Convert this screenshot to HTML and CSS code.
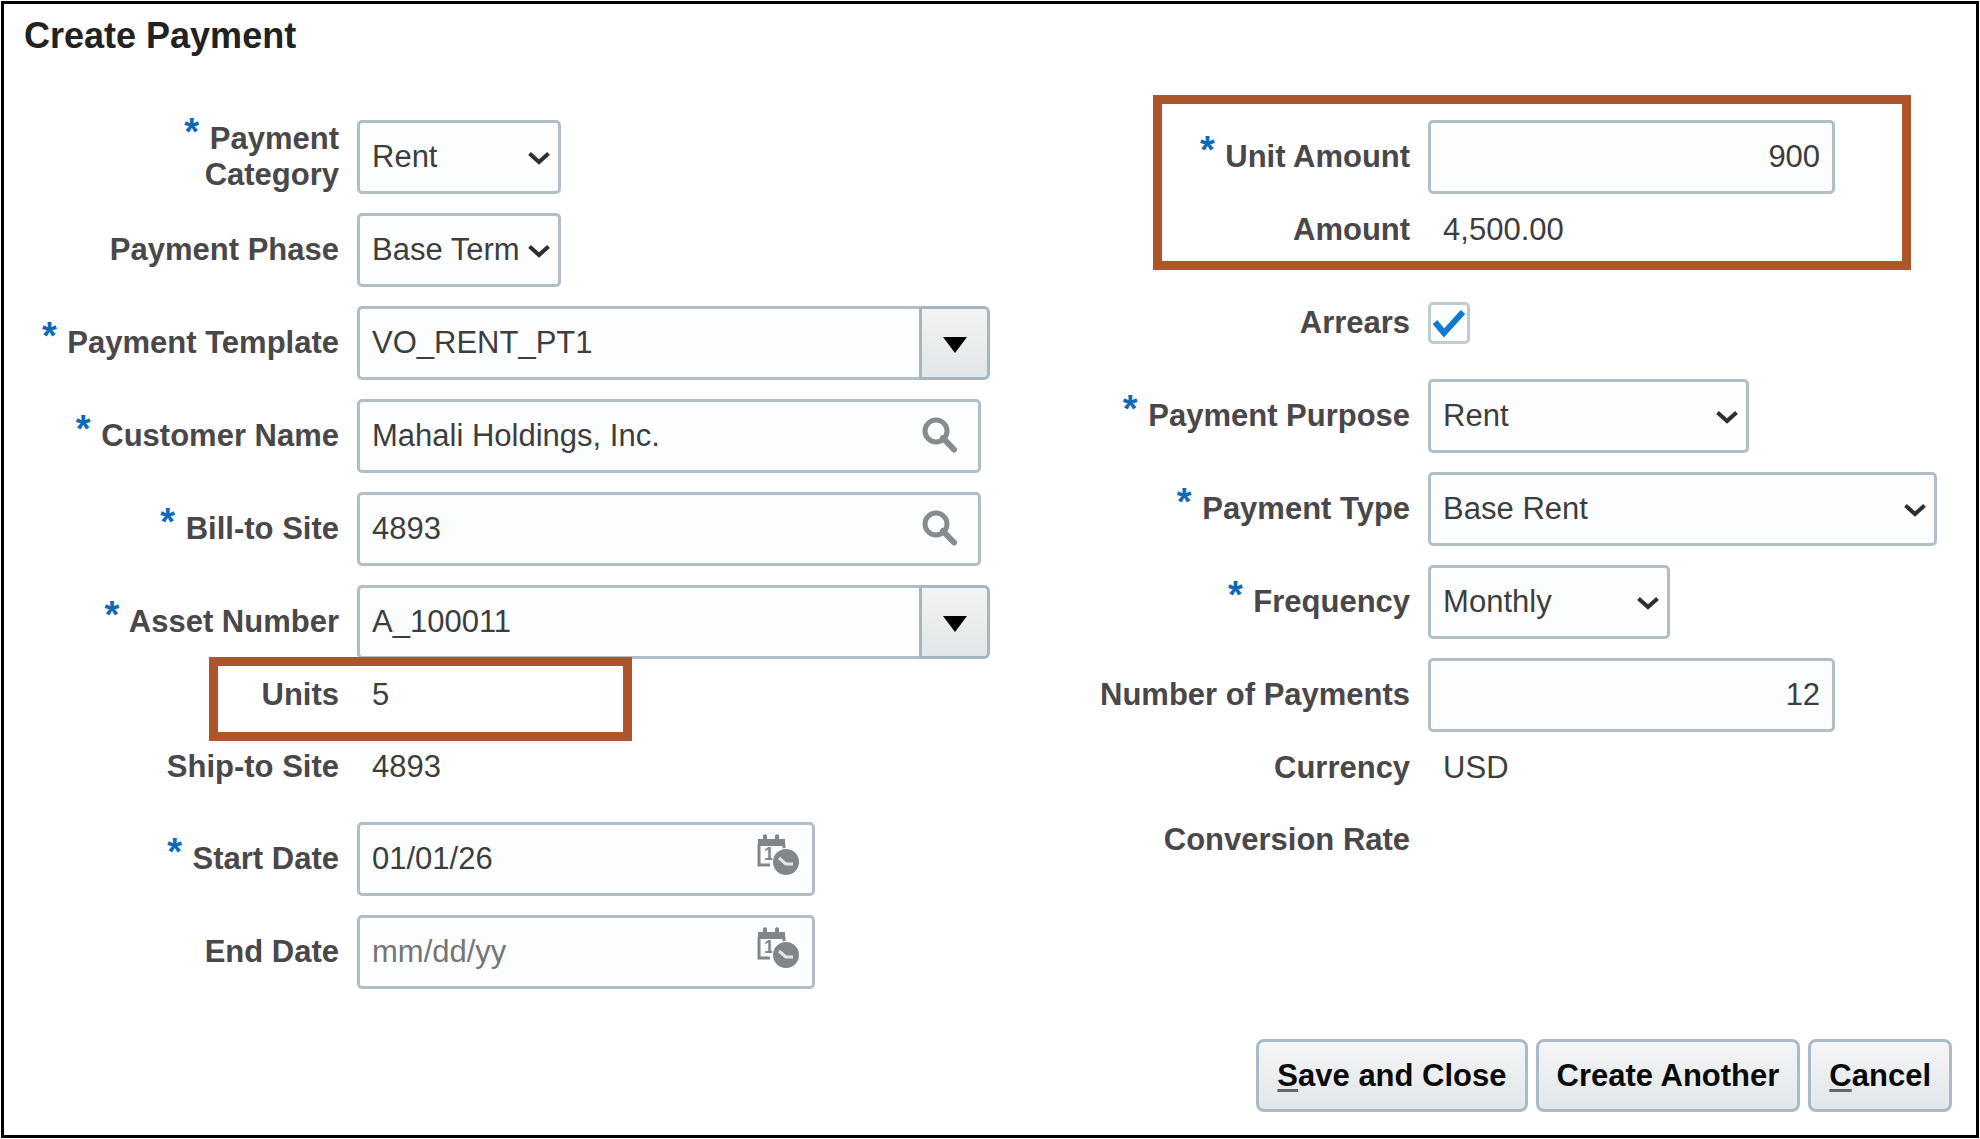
FILE: index.html
```html
<!DOCTYPE html>
<html lang="en">
<head>
    <meta charset="UTF-8">
    <meta name="viewport" content="width=device-width, initial-scale=1.0">
    <title>Create Payment</title>
    <link rel="stylesheet" href="styles.css">
</head>
<body>

    <!-- Shared icons -->
    <svg class="icon-defs" aria-hidden="true">
        <symbol id="chevron" viewBox="0 0 24 14">
            <path d="M2.5 2.5 L12 11 L21.5 2.5" fill="none" stroke="#2e2e2e" stroke-width="4"/>
        </symbol>
        <symbol id="search" viewBox="0 0 36 36">
            <circle cx="14" cy="14" r="11" fill="none" stroke="#868b8e" stroke-width="5"/>
            <path d="M21 21 L32 32.5" fill="none" stroke="#868b8e" stroke-width="6" stroke-linecap="round"/>
        </symbol>
    </svg>

    <form class="dialog">
        <h1>Create Payment</h1>

        <div class="columns">
            <div class="column">
                <div class="field">
                    <label for="category"><span class="required">*</span> Payment<br>Category</label>
                    <div class="control w-small">
                        <select id="category" required><option>Rent</option></select>
                        <svg class="chevron"><use href="#chevron"/></svg>
                    </div>
                </div>
                <div class="field">
                    <label for="phase">Payment Phase</label>
                    <div class="control w-small">
                        <select id="phase"><option>Base Term</option></select>
                        <svg class="chevron"><use href="#chevron"/></svg>
                    </div>
                </div>
                <div class="field">
                    <label for="template"><span class="required">*</span> Payment Template</label>
                    <div class="control combo">
                        <input type="text" id="template" value="VO_RENT_PT1" required>
                        <button type="button" class="combo-button" aria-label="Show templates"><span class="arrow"></span></button>
                    </div>
                </div>
                <div class="field">
                    <label for="customer"><span class="required">*</span> Customer Name</label>
                    <div class="control w-search">
                        <input type="text" id="customer" value="Mahali Holdings, Inc." required>
                        <svg class="search"><use href="#search"/></svg>
                    </div>
                </div>
                <div class="field">
                    <label for="billto"><span class="required">*</span> Bill-to Site</label>
                    <div class="control w-search">
                        <input type="text" id="billto" value="4893" required>
                        <svg class="search"><use href="#search"/></svg>
                    </div>
                </div>
                <div class="field">
                    <label for="asset"><span class="required">*</span> Asset Number</label>
                    <div class="control combo">
                        <input type="text" id="asset" value="A_100011" required>
                        <button type="button" class="combo-button" aria-label="Show assets"><span class="arrow"></span></button>
                    </div>
                </div>
                <div class="highlight highlight-units">
                    <div class="field field-text">
                        <label for="units">Units</label>
                        <output id="units">5</output>
                    </div>
                </div>
                <div class="field field-text spaced-both">
                    <label for="shipto">Ship-to Site</label>
                    <output id="shipto">4893</output>
                </div>
                <div class="field">
                    <label for="start"><span class="required">*</span> Start Date</label>
                    <div class="control w-date">
                        <input type="text" id="start" value="01/01/26" placeholder="mm/dd/yy" required>
                        <svg class="calendar" viewBox="0 0 42 42">
                            <path d="M1 5 H6 V1.5 Q8 -1 10 1.5 V5 H18 V1.5 Q20 -1 22 1.5 V5 H28 V12 H1 Z" fill="#80868a"/>
                            <path d="M2 10 V31 H13 M27 10 V15" fill="none" stroke="#80868a" stroke-width="3"/>
                            <text x="7" y="26" class="calendar-day">1</text>
                            <circle cx="29" cy="28" r="14" fill="#fcfdff"/>
                            <circle cx="29" cy="28" r="13" fill="#80868a"/>
                            <path d="M22 24 L29 30 H36" fill="none" stroke="#e3e6e8" stroke-width="3"/>
                        </svg>
                    </div>
                </div>
                <div class="field">
                    <label for="end">End Date</label>
                    <div class="control w-date">
                        <input type="text" id="end" placeholder="mm/dd/yy">
                        <svg class="calendar" viewBox="0 0 42 42">
                            <path d="M1 5 H6 V1.5 Q8 -1 10 1.5 V5 H18 V1.5 Q20 -1 22 1.5 V5 H28 V12 H1 Z" fill="#80868a"/>
                            <path d="M2 10 V31 H13 M27 10 V15" fill="none" stroke="#80868a" stroke-width="3"/>
                            <text x="7" y="26" class="calendar-day">1</text>
                            <circle cx="29" cy="28" r="14" fill="#fcfdff"/>
                            <circle cx="29" cy="28" r="13" fill="#80868a"/>
                            <path d="M22 24 L29 30 H36" fill="none" stroke="#e3e6e8" stroke-width="3"/>
                        </svg>
                    </div>
                </div>
            </div>

            <div class="column">
                <div class="highlight highlight-amount">
                    <div class="field">
                        <label for="unit-amount"><span class="required">*</span> Unit Amount</label>
                        <div class="control w-number">
                            <input type="text" id="unit-amount" class="number" value="900" required>
                        </div>
                    </div>
                    <div class="field field-text">
                        <label for="amount">Amount</label>
                        <output id="amount">4,500.00</output>
                    </div>
                </div>
                <div class="field field-check">
                    <label for="arrears">Arrears</label>
                    <div class="check">
                        <input type="checkbox" id="arrears" checked>
                        <svg class="tick" viewBox="0 0 34 30"><path d="M3 14 L12 25 L31 4" fill="none" stroke="#1279d0" stroke-width="6"/></svg>
                    </div>
                </div>
                <div class="field">
                    <label for="purpose"><span class="required">*</span> Payment Purpose</label>
                    <div class="control w-purpose">
                        <select id="purpose" required><option>Rent</option></select>
                        <svg class="chevron"><use href="#chevron"/></svg>
                    </div>
                </div>
                <div class="field">
                    <label for="type"><span class="required">*</span> Payment Type</label>
                    <div class="control w-type">
                        <select id="type" required><option>Base Rent</option></select>
                        <svg class="chevron"><use href="#chevron"/></svg>
                    </div>
                </div>
                <div class="field">
                    <label for="frequency"><span class="required">*</span> Frequency</label>
                    <div class="control w-frequency">
                        <select id="frequency" required><option>Monthly</option></select>
                        <svg class="chevron"><use href="#chevron"/></svg>
                    </div>
                </div>
                <div class="field">
                    <label for="payments">Number of Payments</label>
                    <div class="control w-number">
                        <input type="text" id="payments" class="number" value="12">
                    </div>
                </div>
                <div class="field field-text">
                    <label for="currency">Currency</label>
                    <output id="currency">USD</output>
                </div>
                <div class="field field-text spaced-both">
                    <label for="rate">Conversion Rate</label>
                    <output id="rate"></output>
                </div>
            </div>
        </div>

        <div class="actions">
            <button type="submit"><u>S</u>ave and Close</button>
            <button type="button">Create Another</button>
            <button type="button"><u>C</u>ancel</button>
        </div>
    </form>

</body>
</html>
```

FILE: styles.css
```css
*, *::after {
    box-sizing: border-box;
}
body {
    margin: 0;
    padding: 1px;
    background: #fff;
    color: #3d3d3d;
    font-family: "Liberation Sans", Arial, sans-serif;
    font-size: 31px;
    line-height: 36px;
}
input, select, button {
    font: inherit;
    color: inherit;
}
.icon-defs {
    position: absolute;
    width: 0;
    height: 0;
}

.dialog {
    display: flex;
    flex-direction: column;
    min-height: calc(100vh - 2px);
    padding: 11px 24px 23px 20px;
    border: 3px solid #000;
}
h1 {
    margin: 0 0 54px;
    color: #222;
    font-size: 36px;
    line-height: 42px;
}
.columns {
    display: grid;
    grid-template-columns: 5fr 4fr;
}

/* Fields */
.field {
    display: grid;
    grid-template-columns: 315px 1fr;
    column-gap: 18px;
    align-items: center;
    padding: 9px 0 10px;
}
.field-text {
    min-height: 52px;
    padding: 0;
}
.field-check {
    min-height: 93px;
    margin-top: 21px;
}
.spaced-both {
    margin: 20px 0;
}
label {
    color: #4a474a;
    font-weight: bold;
    text-align: right;
}
.required {
    margin-right: 2px;
    color: #0e6ab5;
    font-size: 38px;
    line-height: 0;
    vertical-align: 4px;
}
output {
    padding-left: 15px;
}

/* Controls */
.control {
    position: relative;
    display: flex;
    height: 74px;
}
.control input, .control select {
    width: 100%;
    padding: 0 12px;
    border: 3px solid #b0bec7;
    border-radius: 5px;
    background: #fcfdff;
    appearance: none;
}
.control .number {
    text-align: right;
}
input::placeholder {
    color: #757575;
    opacity: 1;
}
.w-small {
    width: 204px;
}
.w-search {
    width: 624px;
}
.w-date {
    width: 458px;
}
.w-number {
    width: 407px;
}
.w-purpose {
    width: 321px;
}
.w-type {
    width: 509px;
}
.w-frequency {
    width: 242px;
}
.combo {
    width: 633px;
}
.combo input {
    flex: 1;
    border-right: 0;
    border-radius: 5px 0 0 5px;
}
.combo-button {
    display: flex;
    align-items: center;
    justify-content: center;
    width: 71px;
    padding: 4px 0 0;
    border: 3px solid #a4b6c4;
    border-radius: 0 6px 6px 0;
    background: linear-gradient(#f1f3f4, #e3e6e8);
}
.arrow {
    border: 12px solid transparent;
    border-top: 16px solid #000;
    border-bottom: 0;
}
.chevron, .search, .calendar, .tick {
    position: absolute;
    pointer-events: none;
}
.chevron {
    top: 31px;
    right: 10px;
    width: 24px;
    height: 14px;
}
.search {
    top: 18px;
    right: 23px;
    width: 36px;
    height: 36px;
}
.calendar {
    top: 12px;
    right: 16px;
    width: 42px;
    height: 42px;
}
.calendar-day {
    font-size: 18px;
    font-weight: bold;
    fill: #80868a;
}
.check {
    position: relative;
    height: 42px;
}
.check input {
    width: 42px;
    height: 42px;
    margin: 0;
    border: 3px solid #c0cbd2;
    border-radius: 5px;
    background: #fcfdff;
    appearance: none;
}
.tick {
    top: 6px;
    left: 4px;
    width: 34px;
    height: 30px;
}
.check input:not(:checked) + .tick {
    display: none;
}

/* Callout frames drawn over the form */
.highlight {
    position: relative;
}
.highlight::after {
    content: "";
    position: absolute;
    border: 9px solid #ad562b;
    pointer-events: none;
}
.highlight-units::after {
    top: -12px;
    bottom: -20px;
    left: 185px;
    width: 423px;
}
.highlight-amount::after {
    top: -16px;
    right: 41px;
    bottom: -14px;
    left: 58px;
}

.actions {
    display: flex;
    justify-content: flex-end;
    gap: 8px;
    margin-top: auto;
}
.actions button {
    height: 73px;
    padding: 0 18px;
    border: 3px solid #a9bac8;
    border-radius: 8px;
    background: linear-gradient(#f3f5f6, #e3e6e8);
    color: #0a0a0a;
    font-weight: bold;
}
.actions u {
    text-decoration-color: #666;
    text-decoration-thickness: 3px;
    text-underline-offset: 3px;
}
```
